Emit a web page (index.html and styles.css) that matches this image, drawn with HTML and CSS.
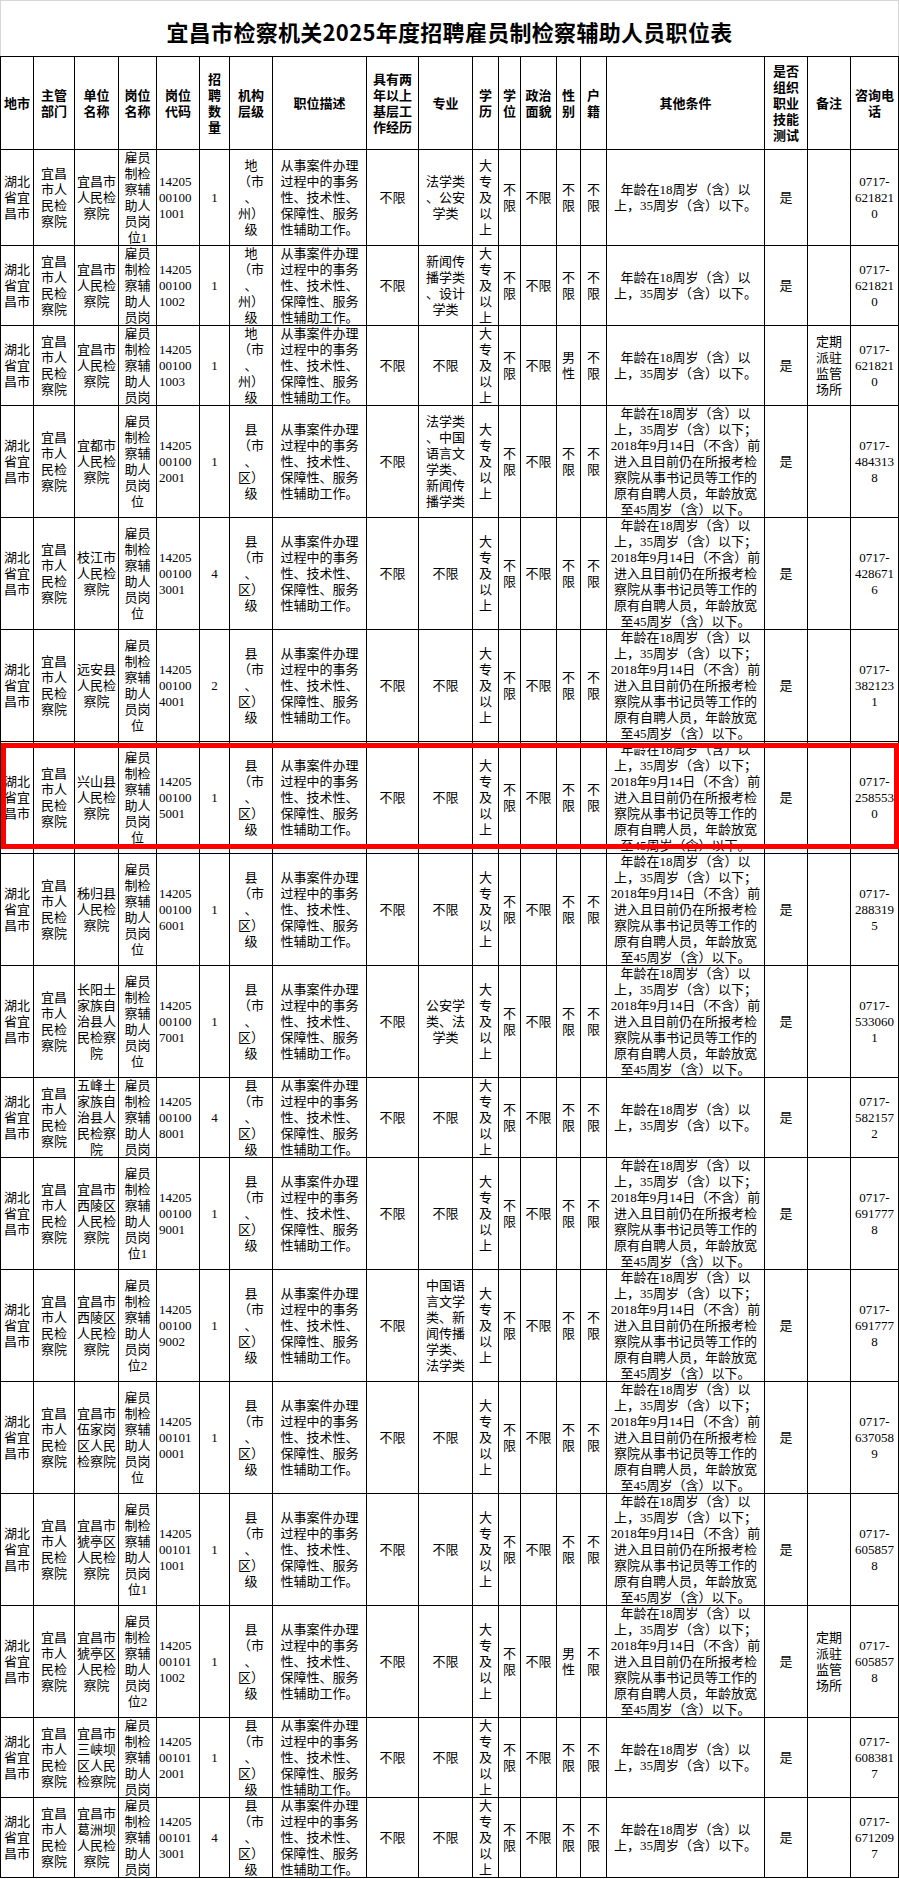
FILE: index.html
```html
<!DOCTYPE html>
<html lang="zh-CN">
<head>
<meta charset="utf-8">
<title>宜昌市检察机关2025年度招聘雇员制检察辅助人员职位表</title>
<link rel="stylesheet" href="styles.css">
</head>
<body>
<div class="page">
  <div class="title">宜昌市检察机关2025年度招聘雇员制检察辅助人员职位表</div>
  <div class="sheet">
    <div class="row hd">
      <div><span>地市</span></div>
      <div><span>主管<br>部门</span></div>
      <div><span>单位<br>名称</span></div>
      <div><span>岗位<br>名称</span></div>
      <div><span>岗位<br>代码</span></div>
      <div><span>招<br>聘<br>数<br>量</span></div>
      <div><span>机构<br>层级</span></div>
      <div><span>职位描述</span></div>
      <div><span>具有两<br>年以上<br>基层工<br>作经历</span></div>
      <div><span>专业</span></div>
      <div><span>学<br>历</span></div>
      <div><span>学<br>位</span></div>
      <div><span>政治<br>面貌</span></div>
      <div><span>性<br>别</span></div>
      <div><span>户<br>籍</span></div>
      <div><span>其他条件</span></div>
      <div><span>是否<br>组织<br>职业<br>技能<br>测试</span></div>
      <div><span>备注</span></div>
      <div><span>咨询电<br>话</span></div>
    </div>

    <!-- 1 -->
    <div class="row h96">
      <div><span>湖北<br>省宜<br>昌市</span></div>
      <div><span>宜昌<br>市人<br>民检<br>察院</span></div>
      <div><span>宜昌市<br>人民检<br>察院</span></div>
      <div><span>雇员<br>制检<br>察辅<br>助人<br>员岗<br>位1</span></div>
      <div class="code"><span>14205<br>00100<br>1001</span></div>
      <div><span>1</span></div>
      <div><span>地<br>（市<br>、<br>州）<br>级</span></div>
      <div><span>从事案件办理<br>过程中的事务<br>性、技术性、<br>保障性、服务<br>性辅助工作。</span></div>
      <div><span>不限</span></div>
      <div><span>法学类<br>、公安<br>学类</span></div>
      <div><span>大<br>专<br>及<br>以<br>上</span></div>
      <div><span>不<br>限</span></div>
      <div><span>不限</span></div>
      <div><span>不<br>限</span></div>
      <div><span>不<br>限</span></div>
      <div><span>年龄在18周岁（含）以<br>上，35周岁（含）以下。</span></div>
      <div><span>是</span></div>
      <div><span></span></div>
      <div><span>0717-<br>621821<br>0</span></div>
    </div>

    <!-- 2 -->
    <div class="row h80">
      <div><span>湖北<br>省宜<br>昌市</span></div>
      <div><span>宜昌<br>市人<br>民检<br>察院</span></div>
      <div><span>宜昌市<br>人民检<br>察院</span></div>
      <div><span>雇员<br>制检<br>察辅<br>助人<br>员岗<br>位2</span></div>
      <div class="code"><span>14205<br>00100<br>1002</span></div>
      <div><span>1</span></div>
      <div><span>地<br>（市<br>、<br>州）<br>级</span></div>
      <div><span>从事案件办理<br>过程中的事务<br>性、技术性、<br>保障性、服务<br>性辅助工作。</span></div>
      <div><span>不限</span></div>
      <div><span>新闻传<br>播学类<br>、设计<br>学类</span></div>
      <div><span>大<br>专<br>及<br>以<br>上</span></div>
      <div><span>不<br>限</span></div>
      <div><span>不限</span></div>
      <div><span>不<br>限</span></div>
      <div><span>不<br>限</span></div>
      <div><span>年龄在18周岁（含）以<br>上，35周岁（含）以下。</span></div>
      <div><span>是</span></div>
      <div><span></span></div>
      <div><span>0717-<br>621821<br>0</span></div>
    </div>

    <!-- 3 -->
    <div class="row h80">
      <div><span>湖北<br>省宜<br>昌市</span></div>
      <div><span>宜昌<br>市人<br>民检<br>察院</span></div>
      <div><span>宜昌市<br>人民检<br>察院</span></div>
      <div><span>雇员<br>制检<br>察辅<br>助人<br>员岗<br>位3</span></div>
      <div class="code"><span>14205<br>00100<br>1003</span></div>
      <div><span>1</span></div>
      <div><span>地<br>（市<br>、<br>州）<br>级</span></div>
      <div><span>从事案件办理<br>过程中的事务<br>性、技术性、<br>保障性、服务<br>性辅助工作。</span></div>
      <div><span>不限</span></div>
      <div><span>不限</span></div>
      <div><span>大<br>专<br>及<br>以<br>上</span></div>
      <div><span>不<br>限</span></div>
      <div><span>不限</span></div>
      <div><span>男<br>性</span></div>
      <div><span>不<br>限</span></div>
      <div><span>年龄在18周岁（含）以<br>上，35周岁（含）以下。</span></div>
      <div><span>是</span></div>
      <div><span>定期<br>派驻<br>监管<br>场所</span></div>
      <div><span>0717-<br>621821<br>0</span></div>
    </div>

    <!-- 4 -->
    <div class="row h112">
      <div><span>湖北<br>省宜<br>昌市</span></div>
      <div><span>宜昌<br>市人<br>民检<br>察院</span></div>
      <div><span>宜都市<br>人民检<br>察院</span></div>
      <div><span>雇员<br>制检<br>察辅<br>助人<br>员岗<br>位</span></div>
      <div class="code"><span>14205<br>00100<br>2001</span></div>
      <div><span>1</span></div>
      <div><span>县<br>（市<br>、<br>区）<br>级</span></div>
      <div><span>从事案件办理<br>过程中的事务<br>性、技术性、<br>保障性、服务<br>性辅助工作。</span></div>
      <div><span>不限</span></div>
      <div><span>法学类<br>、中国<br>语言文<br>学类、<br>新闻传<br>播学类</span></div>
      <div><span>大<br>专<br>及<br>以<br>上</span></div>
      <div><span>不<br>限</span></div>
      <div><span>不限</span></div>
      <div><span>不<br>限</span></div>
      <div><span>不<br>限</span></div>
      <div><span>年龄在18周岁（含）以<br>上，35周岁（含）以下；<br>2018年9月14日（不含）前<br>进入且目前仍在所报考检<br>察院从事书记员等工作的<br>原有自聘人员，年龄放宽<br>至45周岁（含）以下。</span></div>
      <div><span>是</span></div>
      <div><span></span></div>
      <div><span>0717-<br>484313<br>8</span></div>
    </div>

    <!-- 5 -->
    <div class="row h112">
      <div><span>湖北<br>省宜<br>昌市</span></div>
      <div><span>宜昌<br>市人<br>民检<br>察院</span></div>
      <div><span>枝江市<br>人民检<br>察院</span></div>
      <div><span>雇员<br>制检<br>察辅<br>助人<br>员岗<br>位</span></div>
      <div class="code"><span>14205<br>00100<br>3001</span></div>
      <div><span>4</span></div>
      <div><span>县<br>（市<br>、<br>区）<br>级</span></div>
      <div><span>从事案件办理<br>过程中的事务<br>性、技术性、<br>保障性、服务<br>性辅助工作。</span></div>
      <div><span>不限</span></div>
      <div><span>不限</span></div>
      <div><span>大<br>专<br>及<br>以<br>上</span></div>
      <div><span>不<br>限</span></div>
      <div><span>不限</span></div>
      <div><span>不<br>限</span></div>
      <div><span>不<br>限</span></div>
      <div><span>年龄在18周岁（含）以<br>上，35周岁（含）以下；<br>2018年9月14日（不含）前<br>进入且目前仍在所报考检<br>察院从事书记员等工作的<br>原有自聘人员，年龄放宽<br>至45周岁（含）以下。</span></div>
      <div><span>是</span></div>
      <div><span></span></div>
      <div><span>0717-<br>428671<br>6</span></div>
    </div>

    <!-- 6 -->
    <div class="row h112">
      <div><span>湖北<br>省宜<br>昌市</span></div>
      <div><span>宜昌<br>市人<br>民检<br>察院</span></div>
      <div><span>远安县<br>人民检<br>察院</span></div>
      <div><span>雇员<br>制检<br>察辅<br>助人<br>员岗<br>位</span></div>
      <div class="code"><span>14205<br>00100<br>4001</span></div>
      <div><span>2</span></div>
      <div><span>县<br>（市<br>、<br>区）<br>级</span></div>
      <div><span>从事案件办理<br>过程中的事务<br>性、技术性、<br>保障性、服务<br>性辅助工作。</span></div>
      <div><span>不限</span></div>
      <div><span>不限</span></div>
      <div><span>大<br>专<br>及<br>以<br>上</span></div>
      <div><span>不<br>限</span></div>
      <div><span>不限</span></div>
      <div><span>不<br>限</span></div>
      <div><span>不<br>限</span></div>
      <div><span>年龄在18周岁（含）以<br>上，35周岁（含）以下；<br>2018年9月14日（不含）前<br>进入且目前仍在所报考检<br>察院从事书记员等工作的<br>原有自聘人员，年龄放宽<br>至45周岁（含）以下。</span></div>
      <div><span>是</span></div>
      <div><span></span></div>
      <div><span>0717-<br>382123<br>1</span></div>
    </div>

    <!-- 7 -->
    <div class="row h112">
      <div><span>湖北<br>省宜<br>昌市</span></div>
      <div><span>宜昌<br>市人<br>民检<br>察院</span></div>
      <div><span>兴山县<br>人民检<br>察院</span></div>
      <div><span>雇员<br>制检<br>察辅<br>助人<br>员岗<br>位</span></div>
      <div class="code"><span>14205<br>00100<br>5001</span></div>
      <div><span>1</span></div>
      <div><span>县<br>（市<br>、<br>区）<br>级</span></div>
      <div><span>从事案件办理<br>过程中的事务<br>性、技术性、<br>保障性、服务<br>性辅助工作。</span></div>
      <div><span>不限</span></div>
      <div><span>不限</span></div>
      <div><span>大<br>专<br>及<br>以<br>上</span></div>
      <div><span>不<br>限</span></div>
      <div><span>不限</span></div>
      <div><span>不<br>限</span></div>
      <div><span>不<br>限</span></div>
      <div><span>年龄在18周岁（含）以<br>上，35周岁（含）以下；<br>2018年9月14日（不含）前<br>进入且目前仍在所报考检<br>察院从事书记员等工作的<br>原有自聘人员，年龄放宽<br>至45周岁（含）以下。</span></div>
      <div><span>是</span></div>
      <div><span></span></div>
      <div><span>0717-<br>258553<br>0</span></div>
    </div>

    <!-- 8 -->
    <div class="row h112">
      <div><span>湖北<br>省宜<br>昌市</span></div>
      <div><span>宜昌<br>市人<br>民检<br>察院</span></div>
      <div><span>秭归县<br>人民检<br>察院</span></div>
      <div><span>雇员<br>制检<br>察辅<br>助人<br>员岗<br>位</span></div>
      <div class="code"><span>14205<br>00100<br>6001</span></div>
      <div><span>1</span></div>
      <div><span>县<br>（市<br>、<br>区）<br>级</span></div>
      <div><span>从事案件办理<br>过程中的事务<br>性、技术性、<br>保障性、服务<br>性辅助工作。</span></div>
      <div><span>不限</span></div>
      <div><span>不限</span></div>
      <div><span>大<br>专<br>及<br>以<br>上</span></div>
      <div><span>不<br>限</span></div>
      <div><span>不限</span></div>
      <div><span>不<br>限</span></div>
      <div><span>不<br>限</span></div>
      <div><span>年龄在18周岁（含）以<br>上，35周岁（含）以下；<br>2018年9月14日（不含）前<br>进入且目前仍在所报考检<br>察院从事书记员等工作的<br>原有自聘人员，年龄放宽<br>至45周岁（含）以下。</span></div>
      <div><span>是</span></div>
      <div><span></span></div>
      <div><span>0717-<br>288319<br>5</span></div>
    </div>

    <!-- 9 -->
    <div class="row h112">
      <div><span>湖北<br>省宜<br>昌市</span></div>
      <div><span>宜昌<br>市人<br>民检<br>察院</span></div>
      <div><span>长阳土<br>家族自<br>治县人<br>民检察<br>院</span></div>
      <div><span>雇员<br>制检<br>察辅<br>助人<br>员岗<br>位</span></div>
      <div class="code"><span>14205<br>00100<br>7001</span></div>
      <div><span>1</span></div>
      <div><span>县<br>（市<br>、<br>区）<br>级</span></div>
      <div><span>从事案件办理<br>过程中的事务<br>性、技术性、<br>保障性、服务<br>性辅助工作。</span></div>
      <div><span>不限</span></div>
      <div><span>公安学<br>类、法<br>学类</span></div>
      <div><span>大<br>专<br>及<br>以<br>上</span></div>
      <div><span>不<br>限</span></div>
      <div><span>不限</span></div>
      <div><span>不<br>限</span></div>
      <div><span>不<br>限</span></div>
      <div><span>年龄在18周岁（含）以<br>上，35周岁（含）以下；<br>2018年9月14日（不含）前<br>进入且目前仍在所报考检<br>察院从事书记员等工作的<br>原有自聘人员，年龄放宽<br>至45周岁（含）以下。</span></div>
      <div><span>是</span></div>
      <div><span></span></div>
      <div><span>0717-<br>533060<br>1</span></div>
    </div>

    <!-- 10 -->
    <div class="row h80">
      <div><span>湖北<br>省宜<br>昌市</span></div>
      <div><span>宜昌<br>市人<br>民检<br>察院</span></div>
      <div><span>五峰土<br>家族自<br>治县人<br>民检察<br>院</span></div>
      <div><span>雇员<br>制检<br>察辅<br>助人<br>员岗<br>位</span></div>
      <div class="code"><span>14205<br>00100<br>8001</span></div>
      <div><span>4</span></div>
      <div><span>县<br>（市<br>、<br>区）<br>级</span></div>
      <div><span>从事案件办理<br>过程中的事务<br>性、技术性、<br>保障性、服务<br>性辅助工作。</span></div>
      <div><span>不限</span></div>
      <div><span>不限</span></div>
      <div><span>大<br>专<br>及<br>以<br>上</span></div>
      <div><span>不<br>限</span></div>
      <div><span>不限</span></div>
      <div><span>不<br>限</span></div>
      <div><span>不<br>限</span></div>
      <div><span>年龄在18周岁（含）以<br>上，35周岁（含）以下。</span></div>
      <div><span>是</span></div>
      <div><span></span></div>
      <div><span>0717-<br>582157<br>2</span></div>
    </div>

    <!-- 11 -->
    <div class="row h112">
      <div><span>湖北<br>省宜<br>昌市</span></div>
      <div><span>宜昌<br>市人<br>民检<br>察院</span></div>
      <div><span>宜昌市<br>西陵区<br>人民检<br>察院</span></div>
      <div><span>雇员<br>制检<br>察辅<br>助人<br>员岗<br>位1</span></div>
      <div class="code"><span>14205<br>00100<br>9001</span></div>
      <div><span>1</span></div>
      <div><span>县<br>（市<br>、<br>区）<br>级</span></div>
      <div><span>从事案件办理<br>过程中的事务<br>性、技术性、<br>保障性、服务<br>性辅助工作。</span></div>
      <div><span>不限</span></div>
      <div><span>不限</span></div>
      <div><span>大<br>专<br>及<br>以<br>上</span></div>
      <div><span>不<br>限</span></div>
      <div><span>不限</span></div>
      <div><span>不<br>限</span></div>
      <div><span>不<br>限</span></div>
      <div><span>年龄在18周岁（含）以<br>上，35周岁（含）以下；<br>2018年9月14日（不含）前<br>进入且目前仍在所报考检<br>察院从事书记员等工作的<br>原有自聘人员，年龄放宽<br>至45周岁（含）以下。</span></div>
      <div><span>是</span></div>
      <div><span></span></div>
      <div><span>0717-<br>691777<br>8</span></div>
    </div>

    <!-- 12 -->
    <div class="row h112">
      <div><span>湖北<br>省宜<br>昌市</span></div>
      <div><span>宜昌<br>市人<br>民检<br>察院</span></div>
      <div><span>宜昌市<br>西陵区<br>人民检<br>察院</span></div>
      <div><span>雇员<br>制检<br>察辅<br>助人<br>员岗<br>位2</span></div>
      <div class="code"><span>14205<br>00100<br>9002</span></div>
      <div><span>1</span></div>
      <div><span>县<br>（市<br>、<br>区）<br>级</span></div>
      <div><span>从事案件办理<br>过程中的事务<br>性、技术性、<br>保障性、服务<br>性辅助工作。</span></div>
      <div><span>不限</span></div>
      <div><span>中国语<br>言文学<br>类、新<br>闻传播<br>学类、<br>法学类</span></div>
      <div><span>大<br>专<br>及<br>以<br>上</span></div>
      <div><span>不<br>限</span></div>
      <div><span>不限</span></div>
      <div><span>不<br>限</span></div>
      <div><span>不<br>限</span></div>
      <div><span>年龄在18周岁（含）以<br>上，35周岁（含）以下；<br>2018年9月14日（不含）前<br>进入且目前仍在所报考检<br>察院从事书记员等工作的<br>原有自聘人员，年龄放宽<br>至45周岁（含）以下。</span></div>
      <div><span>是</span></div>
      <div><span></span></div>
      <div><span>0717-<br>691777<br>8</span></div>
    </div>

    <!-- 13 -->
    <div class="row h112">
      <div><span>湖北<br>省宜<br>昌市</span></div>
      <div><span>宜昌<br>市人<br>民检<br>察院</span></div>
      <div><span>宜昌市<br>伍家岗<br>区人民<br>检察院</span></div>
      <div><span>雇员<br>制检<br>察辅<br>助人<br>员岗<br>位</span></div>
      <div class="code"><span>14205<br>00101<br>0001</span></div>
      <div><span>1</span></div>
      <div><span>县<br>（市<br>、<br>区）<br>级</span></div>
      <div><span>从事案件办理<br>过程中的事务<br>性、技术性、<br>保障性、服务<br>性辅助工作。</span></div>
      <div><span>不限</span></div>
      <div><span>不限</span></div>
      <div><span>大<br>专<br>及<br>以<br>上</span></div>
      <div><span>不<br>限</span></div>
      <div><span>不限</span></div>
      <div><span>不<br>限</span></div>
      <div><span>不<br>限</span></div>
      <div><span>年龄在18周岁（含）以<br>上，35周岁（含）以下；<br>2018年9月14日（不含）前<br>进入且目前仍在所报考检<br>察院从事书记员等工作的<br>原有自聘人员，年龄放宽<br>至45周岁（含）以下。</span></div>
      <div><span>是</span></div>
      <div><span></span></div>
      <div><span>0717-<br>637058<br>9</span></div>
    </div>

    <!-- 14 -->
    <div class="row h112">
      <div><span>湖北<br>省宜<br>昌市</span></div>
      <div><span>宜昌<br>市人<br>民检<br>察院</span></div>
      <div><span>宜昌市<br>猇亭区<br>人民检<br>察院</span></div>
      <div><span>雇员<br>制检<br>察辅<br>助人<br>员岗<br>位1</span></div>
      <div class="code"><span>14205<br>00101<br>1001</span></div>
      <div><span>1</span></div>
      <div><span>县<br>（市<br>、<br>区）<br>级</span></div>
      <div><span>从事案件办理<br>过程中的事务<br>性、技术性、<br>保障性、服务<br>性辅助工作。</span></div>
      <div><span>不限</span></div>
      <div><span>不限</span></div>
      <div><span>大<br>专<br>及<br>以<br>上</span></div>
      <div><span>不<br>限</span></div>
      <div><span>不限</span></div>
      <div><span>不<br>限</span></div>
      <div><span>不<br>限</span></div>
      <div><span>年龄在18周岁（含）以<br>上，35周岁（含）以下；<br>2018年9月14日（不含）前<br>进入且目前仍在所报考检<br>察院从事书记员等工作的<br>原有自聘人员，年龄放宽<br>至45周岁（含）以下。</span></div>
      <div><span>是</span></div>
      <div><span></span></div>
      <div><span>0717-<br>605857<br>8</span></div>
    </div>

    <!-- 15 -->
    <div class="row h112">
      <div><span>湖北<br>省宜<br>昌市</span></div>
      <div><span>宜昌<br>市人<br>民检<br>察院</span></div>
      <div><span>宜昌市<br>猇亭区<br>人民检<br>察院</span></div>
      <div><span>雇员<br>制检<br>察辅<br>助人<br>员岗<br>位2</span></div>
      <div class="code"><span>14205<br>00101<br>1002</span></div>
      <div><span>1</span></div>
      <div><span>县<br>（市<br>、<br>区）<br>级</span></div>
      <div><span>从事案件办理<br>过程中的事务<br>性、技术性、<br>保障性、服务<br>性辅助工作。</span></div>
      <div><span>不限</span></div>
      <div><span>不限</span></div>
      <div><span>大<br>专<br>及<br>以<br>上</span></div>
      <div><span>不<br>限</span></div>
      <div><span>不限</span></div>
      <div><span>男<br>性</span></div>
      <div><span>不<br>限</span></div>
      <div><span>年龄在18周岁（含）以<br>上，35周岁（含）以下；<br>2018年9月14日（不含）前<br>进入且目前仍在所报考检<br>察院从事书记员等工作的<br>原有自聘人员，年龄放宽<br>至45周岁（含）以下。</span></div>
      <div><span>是</span></div>
      <div><span>定期<br>派驻<br>监管<br>场所</span></div>
      <div><span>0717-<br>605857<br>8</span></div>
    </div>

    <!-- 16 -->
    <div class="row h80">
      <div><span>湖北<br>省宜<br>昌市</span></div>
      <div><span>宜昌<br>市人<br>民检<br>察院</span></div>
      <div><span>宜昌市<br>三峡坝<br>区人民<br>检察院</span></div>
      <div><span>雇员<br>制检<br>察辅<br>助人<br>员岗<br>位</span></div>
      <div class="code"><span>14205<br>00101<br>2001</span></div>
      <div><span>1</span></div>
      <div><span>县<br>（市<br>、<br>区）<br>级</span></div>
      <div><span>从事案件办理<br>过程中的事务<br>性、技术性、<br>保障性、服务<br>性辅助工作。</span></div>
      <div><span>不限</span></div>
      <div><span>不限</span></div>
      <div><span>大<br>专<br>及<br>以<br>上</span></div>
      <div><span>不<br>限</span></div>
      <div><span>不限</span></div>
      <div><span>不<br>限</span></div>
      <div><span>不<br>限</span></div>
      <div><span>年龄在18周岁（含）以<br>上，35周岁（含）以下。</span></div>
      <div><span>是</span></div>
      <div><span></span></div>
      <div><span>0717-<br>608381<br>7</span></div>
    </div>

    <!-- 17 -->
    <div class="row h80">
      <div><span>湖北<br>省宜<br>昌市</span></div>
      <div><span>宜昌<br>市人<br>民检<br>察院</span></div>
      <div><span>宜昌市<br>葛洲坝<br>人民检<br>察院</span></div>
      <div><span>雇员<br>制检<br>察辅<br>助人<br>员岗<br>位</span></div>
      <div class="code"><span>14205<br>00101<br>3001</span></div>
      <div><span>4</span></div>
      <div><span>县<br>（市<br>、<br>区）<br>级</span></div>
      <div><span>从事案件办理<br>过程中的事务<br>性、技术性、<br>保障性、服务<br>性辅助工作。</span></div>
      <div><span>不限</span></div>
      <div><span>不限</span></div>
      <div><span>大<br>专<br>及<br>以<br>上</span></div>
      <div><span>不<br>限</span></div>
      <div><span>不限</span></div>
      <div><span>不<br>限</span></div>
      <div><span>不<br>限</span></div>
      <div><span>年龄在18周岁（含）以<br>上，35周岁（含）以下。</span></div>
      <div><span>是</span></div>
      <div><span></span></div>
      <div><span>0717-<br>671209<br>7</span></div>
    </div>
  </div>
  <div class="highlight"></div>
</div>
</body>
</html>
```

FILE: styles.css
```css
* {
  box-sizing: border-box;
}

html, body {
  margin: 0;
  padding: 0;
  background: #ffffff;
}

body {
  width: 899px;
  font-family: "Liberation Serif", "Noto Sans CJK SC", serif;
  font-size: 13px;
  line-height: 16px;
  color: #000000;
}

.page {
  position: relative;
  width: 899px;
}

.title {
  height: 56px;
  border: 1px solid #d6d6d6;
  border-bottom: none;
  display: flex;
  align-items: center;
  justify-content: center;
  padding-top: 4px;
  font-family: "Noto Sans CJK SC", sans-serif;
  font-weight: 700;
  font-size: 22px;
  line-height: 26px;
  letter-spacing: 0.3px;
}

.sheet {
  width: 899px;
  border-left: 1px solid #000;
  border-top: 1px solid #000;
}

.row {
  display: grid;
  grid-template-columns: 33px 41px 44px 38px 43px 30px 43px 94px 52px 54px 26px 22px 36px 24px 26px 158px 43px 43px 48px;
}

.row > div {
  display: flex;
  overflow: hidden;
  border-right: 1px solid #000;
  border-bottom: 1px solid #000;
  text-align: center;
}

.row > div > span {
  margin: auto;
  white-space: nowrap;
}

.row > div.code > span {
  margin: auto auto auto 2px;
  text-align: left;
}

.hd {
  height: 93px;
  font-family: "Noto Sans CJK SC", sans-serif;
  font-weight: 700;
}

.h96 {
  height: 96px;
}

.h80 {
  height: 80px;
}

.h112 {
  height: 112px;
}

.highlight {
  position: absolute;
  left: 1px;
  top: 743px;
  width: 898px;
  height: 106px;
  border: 5px solid #ff0000;
  pointer-events: none;
}
```
